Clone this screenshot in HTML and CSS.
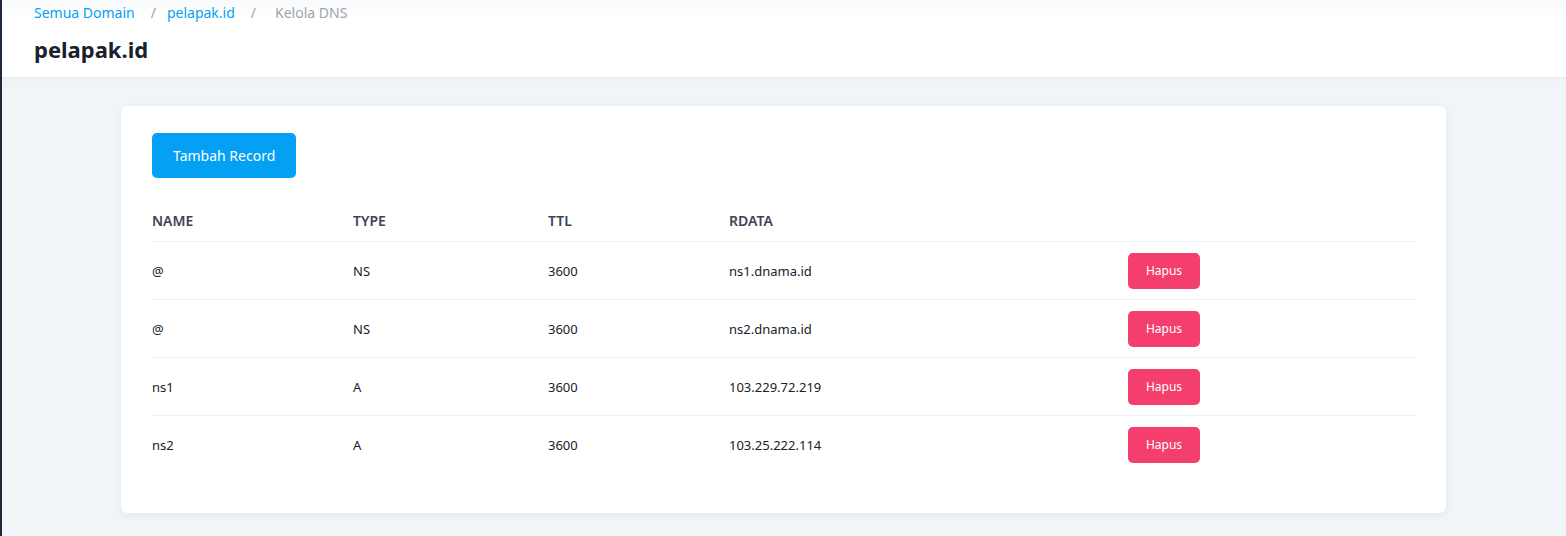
FILE: index.html
```html
<!DOCTYPE html>
<html lang="id">
<head>
    <meta charset="UTF-8">
    <title>Kelola DNS - pelapak.id</title>
    <link rel="stylesheet" href="styles.css">
</head>
<body>

    <div class="main">
        <!-- Header -->
        <header class="page-header">
            <nav class="breadcrumb">
                <a href="#">Semua Domain</a>
                <span class="sep">/</span>
                <a href="#">pelapak.id</a>
                <span class="sep">/</span>
                <span class="current">Kelola DNS</span>
            </nav>
            <h1>pelapak.id</h1>
        </header>

        <!-- DNS records -->
        <div class="content">
            <div class="card">
                <button class="btn-primary">Tambah Record</button>

                <table class="dns-table">
                    <colgroup>
                        <col class="col-name">
                        <col class="col-type">
                        <col class="col-ttl">
                        <col class="col-rdata">
                        <col>
                    </colgroup>
                    <thead>
                        <tr>
                            <th>Name</th>
                            <th>Type</th>
                            <th>TTL</th>
                            <th>Rdata</th>
                            <th></th>
                        </tr>
                    </thead>
                    <tbody>
                        <tr>
                            <td>@</td>
                            <td>NS</td>
                            <td>3600</td>
                            <td>ns1.dnama.id</td>
                            <td><button class="btn-danger">Hapus</button></td>
                        </tr>
                        <tr>
                            <td>@</td>
                            <td>NS</td>
                            <td>3600</td>
                            <td>ns2.dnama.id</td>
                            <td><button class="btn-danger">Hapus</button></td>
                        </tr>
                        <tr>
                            <td>ns1</td>
                            <td>A</td>
                            <td>3600</td>
                            <td>103.229.72.219</td>
                            <td><button class="btn-danger">Hapus</button></td>
                        </tr>
                        <tr>
                            <td>ns2</td>
                            <td>A</td>
                            <td>3600</td>
                            <td>103.25.222.114</td>
                            <td><button class="btn-danger">Hapus</button></td>
                        </tr>
                    </tbody>
                </table>
            </div>
        </div>
    </div>

</body>
</html>
```

FILE: styles.css
```css
body {
    font-family: 'Noto Sans', 'Open Sans', sans-serif;
    background-color: #1e293b;
    color: #1a202c;
    margin: 0;
    padding: 0;
    min-height: 100vh;
}

.main {
    margin-left: 2px;
    min-height: 100vh;
    background-color: #f2f5f8;
}

/* Header */
.page-header {
    background: linear-gradient(#f9fafb, #fff 18px);
    padding: 0 32px 0 32px;
    height: 77px;
    box-shadow: 0 1px 6px rgba(0, 0, 0, 0.06);
    position: relative;
}
.breadcrumb {
    display: flex;
    align-items: center;
    height: 24px;
    font-size: 14px;
}
.breadcrumb a {
    color: #03a0f4;
    text-decoration: none;
}
.breadcrumb .sep {
    color: #9ca3af;
    margin: 0 11px 0 16px;
}
.breadcrumb .current {
    color: #9ca3af;
    margin-left: 8px;
}
.page-header h1 {
    margin: 0;
    padding-top: 10px;
    font-size: 22px;
    font-weight: 700;
    color: #1a202c;
}

/* Card */
.content {
    padding: 29px 0 0 119px;
    width: 1325px;
}
.card {
    background-color: #fff;
    border-radius: 6px;
    box-shadow: 0 2px 8px rgba(0, 0, 0, 0.06);
    padding: 27px 30px 40px 31px;
}
.btn-primary {
    font-family: inherit;
    font-size: 14px;
    color: #fff;
    background-color: #03a0f4;
    border: none;
    border-radius: 5px;
    height: 45px;
    padding: 0 21px;
    cursor: pointer;
}

/* Table */
.dns-table {
    width: 100%;
    border-collapse: collapse;
    margin-top: 21px;
    font-size: 13px;
}
.col-name { width: 201px; }
.col-type { width: 195px; }
.col-ttl { width: 181px; }
.col-rdata { width: 399px; }
.dns-table th {
    text-align: left;
    text-transform: uppercase;
    font-weight: 600;
    font-size: 14px;
    color: #3f4255;
    height: 42px;
    padding: 0;
    border-bottom: 1px solid #edf0f3;
}
.dns-table td {
    height: 57px;
    padding: 0;
    color: #1a202c;
    border-bottom: 1px solid #edf0f3;
}
.dns-table tbody tr:last-child td {
    border-bottom: none;
}
.btn-danger {
    font-family: inherit;
    font-size: 12px;
    color: #fff;
    background-color: #f43f6e;
    border: none;
    border-radius: 5px;
    width: 72px;
    height: 36px;
    cursor: pointer;
}
```
